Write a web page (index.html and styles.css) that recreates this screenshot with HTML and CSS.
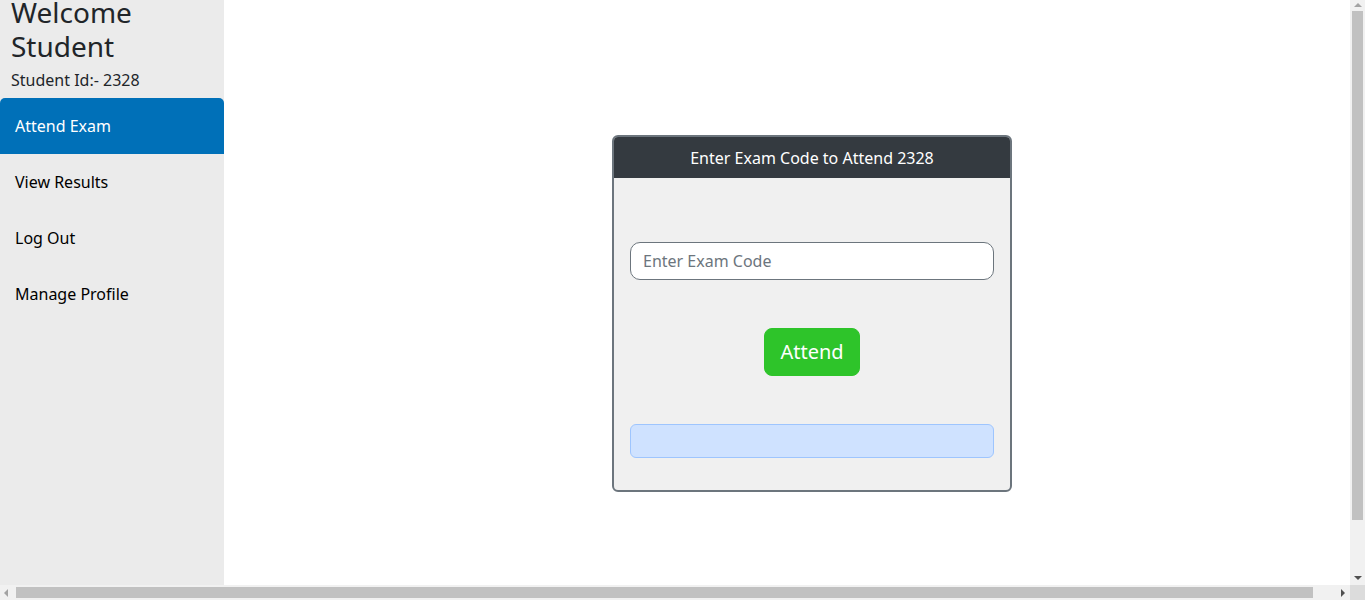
FILE: index.html
```html
<!DOCTYPE html>
<html lang="en">
<head>
<meta charset="utf-8">
<title>Attend Exam</title>
<link rel="stylesheet" href="styles.css">
</head>
<body>
<div class="layout">
  <aside class="sidebar">
    <div class="intro">
      <h3 class="welcome">Welcome Student</h3>
      <p class="student-id">Student Id:- 2328</p>
    </div>
    <nav class="nav">
      <a class="nav-link active" href="#">Attend Exam</a>
      <a class="nav-link" href="#">View Results</a>
      <a class="nav-link" href="#">Log Out</a>
      <a class="nav-link" href="#">Manage Profile</a>
    </nav>
  </aside>
  <main class="main">
    <div class="card">
      <div class="card-header">Enter Exam Code to Attend 2328</div>
      <div class="card-body">
        <input class="code-input" type="text" placeholder="Enter Exam Code">
        <button class="btn-attend" type="button">Attend</button>
        <div class="alert"></div>
      </div>
    </div>
  </main>
</div>
<div class="sb-v" aria-hidden="true">
  <span class="arrow up"></span>
  <span class="thumb-v"></span>
  <span class="arrow down"></span>
</div>
<div class="sb-h" aria-hidden="true">
  <span class="arrow left"></span>
  <span class="thumb-h"></span>
  <span class="arrow right"></span>
</div>
<div class="sb-corner" aria-hidden="true"></div>
</body>
</html>
```

FILE: styles.css
```css
* { box-sizing: border-box; }
html, body { margin: 0; padding: 0; }
body {
  font-family: "Noto Sans", "Open Sans", sans-serif;
  font-size: 16px;
  line-height: 1.5;
  color: #212529;
  background: #ffffff;
}
.layout {
  display: flex;
  width: 1365px;
  height: 600px;
  overflow: hidden;
}
.sidebar {
  width: 224px;
  flex: 0 0 224px;
  background: #ebebeb;
}
.intro { padding-left: 11px; }
.welcome {
  margin: -4px 0 5px;
  font-size: 28px;
  font-weight: 400;
  line-height: 1.2;
  color: #212529;
}
.student-id {
  margin: 0 0 6px;
  font-size: 16px;
  line-height: 24px;
}
.nav { display: flex; flex-direction: column; }
.nav-link {
  display: block;
  padding: 16px 15px;
  line-height: 24px;
  color: #000;
  text-decoration: none;
}
.nav-link.active {
  background: #0070b8;
  color: #fff;
  border-radius: 5px 5px 0 0;
}
.main {
  flex: 1;
  padding-top: 135px;
  padding-left: 388px;
}
.card {
  width: 400px;
  border: 2px solid #6c757d;
  border-radius: 6px;
  background: #f0f0f0;
  overflow: hidden;
}
.card-header {
  background: #343a40;
  color: #fff;
  text-align: center;
  padding: 9px 16px 8px;
  line-height: 24px;
}
.card-body {
  display: flex;
  flex-direction: column;
  align-items: center;
  padding: 64px 16px 32px;
}
.code-input {
  width: 100%;
  height: 38px;
  padding: 6px 12px;
  font-family: inherit;
  font-size: 16px;
  border: 1px solid #6c757d;
  border-radius: 10px;
  background: #fff;
  color: #212529;
}
.code-input::placeholder { color: #6c757d; }
.btn-attend {
  margin-top: 48px;
  padding: 8px 15.5px;
  font-family: inherit;
  font-size: 20px;
  line-height: 30px;
  color: #fff;
  background: #2ec42a;
  border: 1px solid #2ec42a;
  border-radius: 8px;
}
.alert {
  margin-top: 48px;
  width: 100%;
  height: 34px;
  background: #cfe2ff;
  border: 1px solid #9ec5fe;
  border-radius: 6px;
}

/* scrollbar rendering from the reference */
.sb-v {
  position: fixed;
  top: 0;
  right: 0;
  width: 15px;
  height: 585px;
  background: #f1f1f1;
  display: flex;
  flex-direction: column;
  align-items: center;
}
.sb-h {
  position: fixed;
  left: 0;
  bottom: 0;
  width: 1350px;
  height: 15px;
  background: #f1f1f1;
  display: flex;
  align-items: center;
}
.sb-corner {
  position: fixed;
  right: 0;
  bottom: 0;
  width: 15px;
  height: 15px;
  background: #dcdcdc;
}
.thumb-v {
  width: 11px;
  height: 509px;
  margin: 1px 0 auto;
  background: #c1c1c1;
}
.thumb-h {
  height: 11px;
  width: 1297px;
  margin: 0 auto 0 2px;
  background: #c1c1c1;
}
.arrow {
  width: 0;
  height: 0;
  border: 4px solid transparent;
}
.arrow.up { border-bottom-color: #a3a3a3; border-top-width: 0; margin-top: 3px; margin-bottom: 3px; }
.arrow.down { border-top-color: #505050; border-bottom-width: 0; margin-bottom: 5px; }
.arrow.left { border-right-color: #a3a3a3; border-left-width: 0; margin-left: 4px; margin-right: 6px; }
.arrow.right { border-left-color: #505050; border-right-width: 0; margin-right: 5px; }
```
